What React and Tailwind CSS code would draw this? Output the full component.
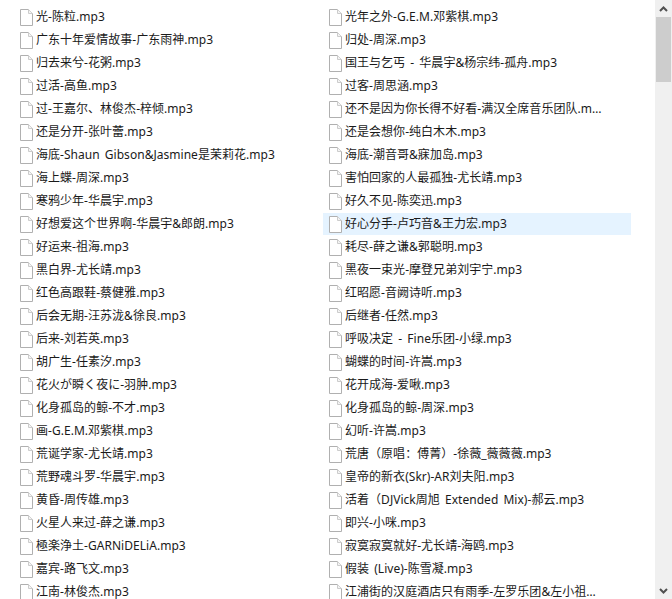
import React from "react";

const leftFiles = [
  "光-陈粒.mp3", "广东十年爱情故事-广东雨神.mp3", "归去来兮-花粥.mp3", "过活-高鱼.mp3",
  "过-王嘉尔、林俊杰-梓倾.mp3", "还是分开-张叶蕾.mp3", "海底-Shaun Gibson&Jasmine是茉莉花.mp3", "海上蝶-周深.mp3",
  "寒鸦少年-华晨宇.mp3", "好想爱这个世界啊-华晨宇&郎朗.mp3", "好运来-祖海.mp3", "黑白界-尤长靖.mp3",
  "红色高跟鞋-蔡健雅.mp3", "后会无期-汪苏泷&徐良.mp3", "后来-刘若英.mp3", "胡广生-任素汐.mp3",
  "花火が瞬く夜に-羽肿.mp3", "化身孤岛的鲸-不才.mp3", "画-G.E.M.邓紫棋.mp3", "荒诞学家-尤长靖.mp3",
  "荒野魂斗罗-华晨宇.mp3", "黄昏-周传雄.mp3", "火星人来过-薛之谦.mp3", "極楽浄土-GARNiDELiA.mp3",
  "嘉宾-路飞文.mp3", "江南-林俊杰.mp3",
];

const rightFiles = [
  "光年之外-G.E.M.邓紫棋.mp3", "归处-周深.mp3", "国王与乞丐 - 华晨宇&杨宗纬-孤舟.mp3", "过客-周思涵.mp3",
  "还不是因为你长得不好看-满汉全席音乐团队.mp3", "还是会想你-纯白木木.mp3", "海底-潮音哥&寐加岛.mp3", "害怕回家的人最孤独-尤长靖.mp3",
  "好久不见-陈奕迅.mp3", "好心分手-卢巧音&王力宏.mp3", "耗尽-薛之谦&郭聪明.mp3", "黑夜一束光-摩登兄弟刘宇宁.mp3",
  "红昭愿-音阙诗听.mp3", "后继者-任然.mp3", "呼吸决定 - Fine乐团-小绿.mp3", "蝴蝶的时间-许嵩.mp3",
  "花开成海-爱啾.mp3", "化身孤岛的鲸-周深.mp3", "幻听-许嵩.mp3", "荒唐（原唱：傅菁）-徐薇_薇薇薇.mp3",
  "皇帝的新衣(Skr)-AR刘夫阳.mp3", "活着（DJVick周旭 Extended Mix)-郝云.mp3", "即兴-小咪.mp3", "寂寞寂寞就好-尤长靖-海鸥.mp3",
  "假装 (Live)-陈雪凝.mp3", "江浦街的汉庭酒店只有雨季-左罗乐团&左小祖咒.mp3",
];

const FileIcon = () => (
  <svg width="13" height="17" viewBox="0 0 13 17" className="shrink-0">
    <path d="M0.5 0.5H8.5L12.5 4.5V16.5H0.5Z" fill="#fff" stroke="#b0b0b0" />
    <path d="M8.5 0.5V4.5H12.5" fill="#f4f4f4" stroke="#cccccc" />
  </svg>
);

const FileRow = ({ name, selected }) => (
  <div className={`flex h-[22px] items-center pl-[6px] ${selected ? "bg-[#e5f3ff]" : ""}`}>
    <FileIcon />
    <span className="ml-[3px] w-[258px] truncate text-[12px] leading-[22px] tracking-[0.03px] [word-spacing:2px] text-[#1a1a1a]">{name}</span>
  </div>
);

const Scrollbar = () => (
  <div className="flex h-full w-[17px] shrink-0 flex-col items-center bg-[#f0f0f0]">
    <div className="flex h-[17px] w-full items-center justify-center">
      <svg width="9" height="6" viewBox="0 0 9 6">
        <path d="M1 5L4.5 1.5L8 5" fill="none" stroke="#505050" strokeWidth="2" />
      </svg>
    </div>
    <div className="h-[65px] w-[15px] bg-[#cdcdcd]" />
    <div className="flex-1" />
    <div className="flex h-[17px] w-full items-center justify-center">
      <svg width="9" height="6" viewBox="0 0 9 6">
        <path d="M1 1L4.5 4.5L8 1" fill="none" stroke="#505050" strokeWidth="2" />
      </svg>
    </div>
  </div>
);

export default function App() {
  return (
    <div className="flex h-[599px] w-[672px] overflow-hidden bg-white font-['Noto_Sans','Noto_Sans_CJK_SC',sans-serif]">
      <div className="flex-1 overflow-hidden pl-[14px] pt-[6px]">
        <div className="grid grid-cols-[308px_308px] gap-x-px gap-y-px">
          {leftFiles.map((name, i) => (
            <React.Fragment key={name}>
              <FileRow name={name} />
              <FileRow name={rightFiles[i]} selected={i === 9} />
            </React.Fragment>
          ))}
        </div>
      </div>
      <Scrollbar />
    </div>
  );
}
